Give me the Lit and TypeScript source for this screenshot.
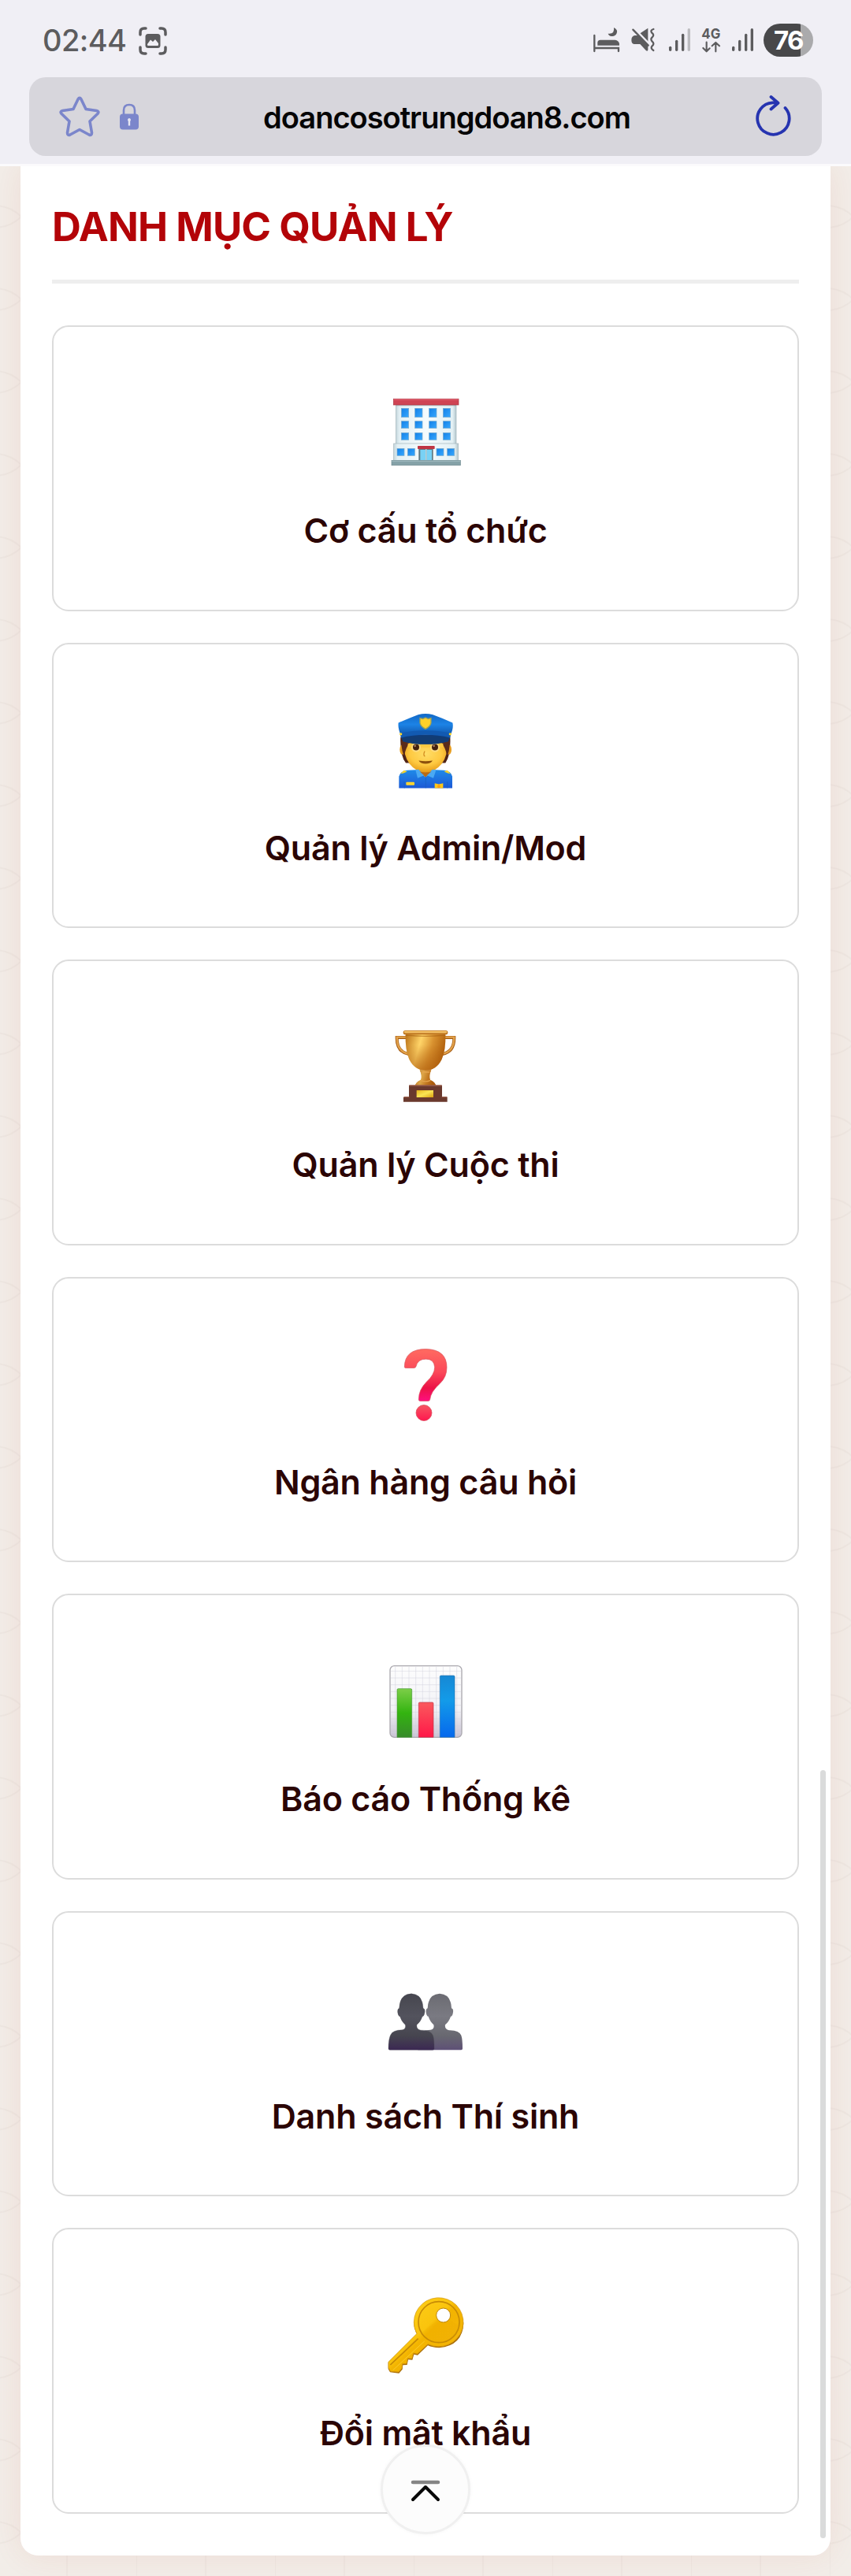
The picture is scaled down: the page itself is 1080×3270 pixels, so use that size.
import { LitElement, css, html, svg } from 'lit'
import { customElement } from 'lit/decorators.js'

const ICONS = {
  office: svg`
    <defs>
      <linearGradient id="wall" x1="0" x2="1" y1="0" y2="0">
        <stop offset="0" stop-color="#c3d5db" />
        <stop offset=".06" stop-color="#e3f0f4" />
        <stop offset=".5" stop-color="#f5fbfd" />
        <stop offset=".94" stop-color="#e3f0f4" />
        <stop offset="1" stop-color="#b3c6cc" />
      </linearGradient>
      <linearGradient id="pane" x1="0" x2="1" y1="0" y2="1">
        <stop offset="0" stop-color="#1480e6" />
        <stop offset="1" stop-color="#36a8ff" />
      </linearGradient>
    </defs>
    <rect x="187" y="128" width="230" height="155" fill="url(#wall)" stroke="#a3b4ba" stroke-width="2" />
    <rect x="179" y="279" width="246" height="66" fill="url(#wall)" stroke="#a3b4ba" stroke-width="2" />
    <rect x="188" y="130" width="228" height="6" fill="#9aabb0" opacity=".6" />
    <rect x="178" y="109" width="248" height="23" fill="#cf4454" stroke="#a93341" stroke-width="2" />
    <rect x="179" y="110" width="246" height="4" fill="#e05f6e" />
    ${[145, 194, 238].map((y, i) => [208, 260, 314, 367].map((x) => svg`
      <rect x=${x} y=${y} width="28" height=${i ? 27 : 34} fill="url(#pane)" stroke="#75a9cc" stroke-width="2" />
    `))}
    ${[192, 232, 342, 383].map((x) => svg`
      <rect x=${x} y="298" width="27" height="27" fill="url(#pane)" stroke="#75a9cc" stroke-width="2" />
    `)}
    <rect x="274" y="298" width="55" height="46" fill="#5e7881" />
    <rect x="280" y="303" width="20" height="40" fill="#79d2f5" />
    <rect x="304" y="303" width="20" height="40" fill="#79d2f5" />
    <rect x="301" y="300" width="3" height="44" fill="#e8f5f9" />
    <rect x="270" y="288" width="65" height="12" rx="2" fill="#bf3544" />
    <rect x="171" y="343" width="262" height="19" fill="#85a2a8" stroke="#6d898f" stroke-width="2" />
    <rect x="172" y="344" width="260" height="4" fill="#9db7bc" />
  `,
  officer: svg`
    <defs>
      <linearGradient id="cap" x1="0" x2="0" y1="0" y2="1">
        <stop offset="0" stop-color="#1268c5" />
        <stop offset=".5" stop-color="#1c83e6" />
        <stop offset="1" stop-color="#1157ac" />
      </linearGradient>
      <radialGradient id="skin" cx=".5" cy=".4" r=".6">
        <stop offset="0" stop-color="#ffdd67" />
        <stop offset=".6" stop-color="#fec941" />
        <stop offset="1" stop-color="#e59a17" />
      </radialGradient>
      <linearGradient id="shirt" x1="0" x2="0" y1="0" y2="1">
        <stop offset="0" stop-color="#1f8be9" />
        <stop offset="1" stop-color="#1c59d6" />
      </linearGradient>
    </defs>
    <path d="M205 165 Q202 235 225 264 H240 V165 Z M394 165 Q397 235 376 264 H360 V165 Z" fill="#4e2317" />
    <ellipse cx="212" cy="213" rx="10" ry="19" fill="#e69c1e" />
    <ellipse cx="389" cy="213" rx="10" ry="19" fill="#e69c1e" />
    <path d="M274 275 H326 V302 L300 318 L274 302 Z" fill="#c9781a" />
    <path d="M217 180 H384 Q386 235 362 267 Q335 300 300 300 Q265 300 239 267 Q215 235 217 180 Z" fill="url(#skin)" />
    <path d="M207 180 Q210 225 219 237 Q225 205 240 186 H360 Q376 205 382 237 Q391 225 393 180 Z" fill="#5b2b19" />
    <path d="M233 190 H367 V205 H233 Z" fill="#fdc942" />
    <circle cx="264" cy="205" r="18" fill="#ffdf8a" opacity=".8" />
    <circle cx="336" cy="205" r="18" fill="#ffdf8a" opacity=".8" />
    <circle cx="264" cy="204" r="12" fill="#43210f" />
    <circle cx="336" cy="204" r="12" fill="#43210f" />
    <circle cx="260" cy="199" r="4" fill="#a9805e" />
    <circle cx="332" cy="199" r="4" fill="#a9805e" />
    <path d="M297 219 Q290 235 298 239" fill="none" stroke="#d38d20" stroke-width="4" />
    <path d="M274 255 Q300 260 327 255 Q320 267 300 267 Q281 267 274 255 Z" fill="#8d500d" />
    <path d="M203 155 H397 L387 182 Q352 193 300 193 Q248 193 214 182 Z" fill="#103d7b" />
    <path d="M206 158 Q194 130 197 111 Q240 92 272 80 Q300 73 328 80 Q362 92 403 111 Q408 130 395 158 Q350 148 300 148 Q250 148 206 158 Z" fill="url(#cap)" />
    <path d="M206 150 Q250 140 300 140 Q350 140 395 150 L394 168 Q350 157 300 157 Q250 157 207 168 Z" fill="#125ab1" />
    <path d="M214 169 Q300 153 387 169 L382 181 Q350 192 300 192 Q245 192 220 181 Z" fill="#123c73" />
    <circle cx="206" cy="154" r="5" fill="#ffd82b" />
    <circle cx="394" cy="154" r="5" fill="#ffd82b" />
    <path d="M300 89 L310 94 L323 91 V112 Q320 128 300 137 Q280 128 277 112 V91 L290 94 Z" fill="#9ba05a" />
    <path d="M300 94 L310 98 L319 96 V112 Q316 124 300 132 Q284 124 281 112 V96 L290 98 Z" fill="#ffd129" />
    <path d="M199 360 V315 Q204 294 232 292 L264 290 L300 318 L336 290 L369 292 Q397 294 402 315 V360 Z" fill="url(#shirt)" />
    <path d="M262 290 L273 289 L300 312 L327 289 L340 292 L330 322 L300 309 L270 322 Z" fill="#4aa9f3" />
    <path d="M277 296 L300 316 L323 296 Q300 305 277 296 Z" fill="#b96b16" />
    <path d="M301 316 V360 M219 335 L220 360 M383 335 V360" stroke="#1a5fbb" stroke-width="2" />
    <path d="M205 305 L218 292 L230 297 L216 303 Z M396 305 L383 292 L371 297 L385 303 Z" fill="#f5d22c" />
    <rect x="226" y="337" width="32" height="12" rx="3" fill="#ffd531" />
    <path d="M335 341 L351 345 L367 341 V360 H335 Z" fill="#ffc818" />
    <circle cx="351" cy="353" r="6" fill="#f99d17" />
  `,
  trophy: svg`
    <defs>
      <linearGradient id="cup" x1="0" x2="1" y1="0" y2=".25">
        <stop offset="0" stop-color="#b96f15" />
        <stop offset=".4" stop-color="#ffd468" />
        <stop offset=".7" stop-color="#d8912f" />
        <stop offset="1" stop-color="#b4640f" />
      </linearGradient>
      <linearGradient id="shade" x1="0" x2="0" y1="0" y2="1">
        <stop offset=".3" stop-color="#b0600f" stop-opacity="0" />
        <stop offset="1" stop-color="#b0600f" stop-opacity=".65" />
      </linearGradient>
      <linearGradient id="plate" x1="0" x2="1" y1="0" y2="1">
        <stop offset="0" stop-color="#e7b31b" />
        <stop offset=".5" stop-color="#f9e554" />
        <stop offset="1" stop-color="#d9a010" />
      </linearGradient>
    </defs>
    <path d="M228 111 H191 Q190 166 236 174 M372 111 H409 Q410 166 364 174" fill="none" stroke="#a65c13" stroke-width="12" />
    <path d="M228 110 H191 Q191 165 236 173 M372 110 H409 Q409 165 364 173" fill="none" stroke="#e2a24b" stroke-width="7" />
    <path d="M278 235 H322 Q312 258 318 272 Q340 282 339 296 H261 Q260 282 282 272 Q288 258 278 235 Z" fill="url(#cup)" />
    <path d="M278 235 H322 Q312 258 318 272 Q340 282 339 296 H261 Q260 282 282 272 Q288 258 278 235 Z" fill="#954806" opacity=".32" />
    <path d="M284 243 H316 M281 274 Q300 283 319 274" fill="none" stroke="#e4a34c" stroke-width="4" />
    <path d="M224 97 H376 Q378 160 362 194 Q341 236 300 236 Q259 236 238 194 Q222 160 224 97 Z" fill="url(#cup)" />
    <path d="M224 97 H376 Q378 160 362 194 Q341 236 300 236 Q259 236 238 194 Q222 160 224 97 Z" fill="url(#shade)" />
    <path d="M224 102 Q300 110 376 102" stroke="#a86112" stroke-width="4" fill="none" opacity=".6" />
    <rect x="215" y="84" width="170" height="16" rx="8" fill="#c07924" />
    <path d="M222 90 H378" stroke="#f4c268" stroke-width="7" stroke-linecap="round" />
    <path d="M237 293 H363 V338 H383 V356 H216 V338 H237 Z" fill="#6a392d" />
    <path d="M238 294 H362 M218 338 H238 M362 338 H382" stroke="#9a5f4c" stroke-width="4" />
    <rect x="266" y="312" width="64" height="27" fill="url(#plate)" />
  `,
  question: svg`
    <defs>
      <linearGradient id="mark" x1="0" x2="0" y1="0" y2="1">
        <stop offset="0" stop-color="#ff6b61" />
        <stop offset=".45" stop-color="#fb4759" />
        <stop offset=".75" stop-color="#ec1247" />
        <stop offset="1" stop-color="#ff0f80" />
      </linearGradient>
      <linearGradient id="dot" x1="0" x2="0" y1="0" y2="1">
        <stop offset="0" stop-color="#f65661" />
        <stop offset="1" stop-color="#ff174f" />
      </linearGradient>
    </defs>
    <path d="M220 165 Q220 96 302 96 Q381 98 381 166 Q381 203 355 227 Q320 258 317 288 Q316 294 310 294 H280 Q274 294 274 288 Q274 251 303 222 Q335 193 335 165 Q333 134 302 134 Q270 134 264 162 Q262 168 256 168 H226 Q220 168 220 165 Z" fill="url(#mark)" stroke="#d64f58" stroke-width="2" />
    <circle cx="294" cy="339" r="30" fill="url(#dot)" stroke="#d44453" stroke-width="2" />
  `,
  chart: svg`
    <defs>
      <linearGradient id="sheet" x1="0" x2="0" y1="0" y2="1">
        <stop offset="0" stop-color="#fdfdfd" />
        <stop offset=".6" stop-color="#f3f3f7" />
        <stop offset="1" stop-color="#c9c3d4" />
      </linearGradient>
      <linearGradient id="green" x1="0" x2="0" y1="0" y2="1">
        <stop offset="0" stop-color="#7cce48" />
        <stop offset=".5" stop-color="#33b410" />
        <stop offset="1" stop-color="#388b2b" />
      </linearGradient>
      <linearGradient id="red" x1="0" x2="0" y1="0" y2="1">
        <stop offset="0" stop-color="#fa5a5d" />
        <stop offset="1" stop-color="#ff1748" />
      </linearGradient>
      <linearGradient id="blue" x1="0" x2="0" y1="0" y2="1">
        <stop offset="0" stop-color="#1688d4" />
        <stop offset=".4" stop-color="#139be9" />
        <stop offset="1" stop-color="#0668ed" />
      </linearGradient>
    </defs>
    <rect x="165" y="104" width="273" height="272" rx="16" fill="url(#sheet)" stroke="#aaa8ae" stroke-width="4" />
    ${[185, 211, 237, 263, 289, 315, 341, 367, 393, 419].map((x) => svg`
      <path d="M${x} 107 V373" stroke="#d2d3df" stroke-width="1.5" />
    `)}
    ${[124, 150, 176, 202, 228, 254, 280, 306, 332, 358].map((y) => svg`
      <path d="M168 ${y} H436" stroke="#d2d3df" stroke-width="1.5" />
    `)}
    <path d="M192 376 V195 Q192 191 196 191 H244 Q248 191 248 195 V376 Z" fill="url(#green)" stroke="#459934" stroke-width="2" />
    <path d="M274 376 V247 Q274 243 278 243 H326 Q330 243 330 247 V376 Z" fill="url(#red)" stroke="#bd3347" stroke-width="2" />
    <path d="M355 376 V145 Q355 141 359 141 H407 Q411 141 411 145 V376 Z" fill="url(#blue)" stroke="#2472b0" stroke-width="2" />
  `,
  people: svg`
    <defs>
      <linearGradient id="front" x1="0" x2="0" y1="0" y2="1">
        <stop offset="0" stop-color="#46464f" />
        <stop offset=".4" stop-color="#53535d" />
        <stop offset=".75" stop-color="#46454f" />
        <stop offset="1" stop-color="#3b2853" />
      </linearGradient>
      <linearGradient id="back" x1="0" x2="0" y1="0" y2="1">
        <stop offset="0" stop-color="#6b6b72" />
        <stop offset=".4" stop-color="#7a7a82" />
        <stop offset=".75" stop-color="#686870" />
        <stop offset="1" stop-color="#5e5076" />
      </linearGradient>
    </defs>
    <path transform="translate(108 0)" d="M246 121 Q289 123 291 176 Q299 178 297 191 Q295 207 288 208 Q281 229 267 239 Q264 256 282 260 Q320 259 328 280 Q333 294 333 330 Q333 335 328 335 H164 Q159 335 159 330 Q159 294 167 278 Q176 259 211 259 Q227 256 223 239 Q210 229 203 208 Q196 207 194 191 Q193 178 200 176 Q202 123 246 121 Z" fill="url(#back)" />
    <path d="M246 121 Q289 123 291 176 Q299 178 297 191 Q295 207 288 208 Q281 229 267 239 Q264 256 282 260 Q320 259 328 280 Q333 294 333 330 Q333 335 328 335 H164 Q159 335 159 330 Q159 294 167 278 Q176 259 211 259 Q227 256 223 239 Q210 229 203 208 Q196 207 194 191 Q193 178 200 176 Q202 123 246 121 Z" fill="url(#front)" stroke="#3f3f48" stroke-width="1" />
  `,
  key: svg`
    <defs>
      <linearGradient id="gold" x1="0" x2="1" y1="0" y2="1">
        <stop offset="0" stop-color="#ffd21f" />
        <stop offset=".45" stop-color="#fac40d" />
        <stop offset=".5" stop-color="#f3b400" />
        <stop offset="1" stop-color="#f4b50e" />
      </linearGradient>
    </defs>
    <path d="M256 176 Q260 98 350 82 Q430 86 445 176 Q442 262 352 271 Q326 270 309 262 L270 299 L256 296 L250 317 L234 316 L230 336 L214 337 L212 353 L199 368 L165 364 L158 352 V326 L267 218 Q256 199 256 176 Z" fill="#a96d08" />
    <path d="M256 174 A94 93 0 1 1 309 257 L269 294 L254 291 L248 312 L232 311 L228 331 L212 332 L210 349 L198 363 L167 361 L159 348 V325 L267 217 Q256 197 256 174 Z" fill="url(#gold)" stroke="#d19713" stroke-width="2" />
    <circle cx="351" cy="173" r="78" fill="none" stroke="#c68a06" stroke-width="5" />
    <path d="M285 214 L368 147 L430 190 Q412 250 351 250 Q310 248 285 214 Z" fill="#e9a800" opacity=".18" />
    <path d="M166 336 L272 236" stroke="#c48706" stroke-width="5" />
    <path d="M176 356 L296 246" stroke="#ffdd4b" stroke-width="3" opacity=".6" />
    <circle cx="368" cy="147" r="27" fill="#fff" stroke="#bd850c" stroke-width="3" />
  `
}

// top is where the artwork starts on its 600x450 drawing board
const MENU = [
  { label: 'Cơ cấu tổ chức', icon: ICONS.office, top: 69 },
  { label: 'Quản lý Admin/Mod', icon: ICONS.officer, top: 46.5 },
  { label: 'Quản lý Cuộc thi', icon: ICONS.trophy, top: 54 },
  { label: 'Ngân hàng câu hỏi', icon: ICONS.question, top: 61.5 },
  { label: 'Báo cáo Thống kê', icon: ICONS.chart, top: 69 },
  { label: 'Danh sách Thí sinh', icon: ICONS.people, top: 46.5 },
  { label: 'Đổi mật khẩu', icon: ICONS.key, top: 54 }
]

@customElement('status-bar')
export class StatusBar extends LitElement {
  static styles = css`
    :host {
      display: flex;
      align-items: center;
      height: 98px;
      padding: 0 48px 0 54px;
      box-sizing: border-box;
      color: #5c5c5e;
      font-family: Inter, 'Liberation Sans', sans-serif;
    }
    .time {
      font-size: 38px;
      font-weight: 500;
      letter-spacing: -0.6px;
      line-height: 60px;
      margin-top: 4px;
    }
    .capture {
      width: 36px;
      height: 36px;
      margin: 5px auto 0 16px;
    }
    .cluster {
      display: flex;
      margin-top: 2px;
    }
    .cluster svg {
      height: 60px;
    }
    .battery {
      width: 63px;
      height: 42px;
      margin: 10px 0 0 3px;
      border-radius: 21px;
      background: linear-gradient(90deg, #48484a 75%, #aaaaac 75%);
      color: #fff;
      font-size: 33px;
      font-weight: 700;
      letter-spacing: -1.5px;
      line-height: 43px;
      text-align: center;
    }
  `

  _signal (left, width, faded) {
    return html`
      <svg width=${width / 3} viewBox="${left} 0 ${width} 180">
        <g stroke="#5c5c5e" stroke-width="10" stroke-linecap="round">
          <path d="M${left + 17} 121 V130" />
          <path d="M${left + 41} 97 V130" />
          <path d="M${left + 65} 73 V130" />
          <path d="M${left + 88} 53 V130" opacity=${faded ? 0.35 : 1} />
        </g>
      </svg>
    `
  }

  render () {
    return html`
      <span class="time">02:44</span>
      <svg class="capture" viewBox="0 0 36 36">
        <path d="M2 10 V7 Q2 2 7 2 H9 M27 2 H29 Q34 2 34 7 V10 M34 26 V29 Q34 34 29 34 H27 M9 34 H7 Q2 34 2 29 V26" fill="none" stroke="#5c5c5e" stroke-width="3.5" stroke-linecap="round" />
        <rect x="8.500" y="9" width="19" height="18" rx="3.500" fill="#5c5c5e" />
        <path d="M11 22 L15 16.500 L18 19 L21 16 L25 21 V23 Q25 24 24 24 H12 Q11 24 11 23 Z" fill="#f0eff5" />
      </svg>
      <div class="cluster">
        <svg width="48.300" viewBox="60 0 145 180">
          <path d="M73 75 V135 M73 123 H165 V135" fill="none" stroke="#5c5c5e" stroke-width="7" stroke-linecap="round" />
          <path d="M85 113 V103 Q85 92 96 92 H152 Q165 94 168 106 V113 Z" fill="#5c5c5e" />
          <path d="M147 45 Q164 53 158 67 Q152 80 138 78 Q128 77 125 68 Q151 71 147 45 Z" fill="#5c5c5e" />
        </svg>
        <svg width="46.700" viewBox="205 0 140 180">
          <path d="M246 68 L278 47 V130 Q277 137 271 133 L248 108 H225 Q215 106 215 92 Q215 78 227 75 H243 Z" fill="#5c5c5e" />
          <path d="M223 47 L293 119" stroke="#f0eff5" stroke-width="9" />
          <path d="M221 53 L279 113" stroke="#5c5c5e" stroke-width="7" stroke-linecap="round" />
          <path d="M299 51 Q286 55 292 64 Q304 73 294 82 Q286 89 294 98 Q304 106 294 115 Q286 124 299 132" fill="none" stroke="#5c5c5e" stroke-width="7" stroke-linecap="round" />
        </svg>
        ${this._signal(345, 125, true)}
        <svg width="38.300" viewBox="470 0 115 180">
          <text x="480" y="87" textLength="72" lengthAdjust="spacingAndGlyphs" font-size="54" font-weight="700" fill="#5c5c5e">4G</text>
          <path d="M499 101 V135 M486 123 L499 136 L511 124 M534 136 V103 M520 115 L534 102 L548 115" fill="none" stroke="#5c5c5e" stroke-width="6.500" stroke-linecap="round" stroke-linejoin="round" />
        </svg>
        ${this._signal(582, 123, false)}
        <div class="battery">76</div>
      </div>
    `
  }
}

@customElement('address-bar')
export class AddressBar extends LitElement {
  static styles = css`
    :host {
      display: flex;
      align-items: center;
      height: 100px;
      margin: 0 37px;
      padding: 0 38px;
      box-sizing: border-box;
      border-radius: 21px;
      background: #d7d6dc;
      color: #050506;
      font-family: Inter, 'Liberation Sans', sans-serif;
    }
    .side {
      display: flex;
      align-items: center;
      width: 160px;
      gap: 24px;
    }
    .end {
      width: 106px;
      justify-content: flex-end;
    }
    .url {
      flex: 1;
      margin-top: 2px;
      font-size: 38px;
      font-weight: 600;
      letter-spacing: -1px;
      text-align: center;
      white-space: nowrap;
    }
  `

  render () {
    return html`
      <div class="side">
        <svg width="52" height="52" viewBox="0 0 52 52">
          <path d="M24 4 Q26 0.800 28 4 L34 16.500 L47.500 18.500 Q51.500 19.500 48.800 22.500 L39 32 L41.500 46.500 Q41.500 50.500 38 49 L26 42.500 L14 49 Q10.500 50.500 10.500 46.500 L13 32 L3.200 22.500 Q0.500 19.500 4.500 18.500 L18 16.500 Z" fill="none" stroke="#7b86cb" stroke-width="3.600" stroke-linejoin="round" />
        </svg>
        <svg width="26" height="34" viewBox="0 0 26 34">
          <path d="M6 15 V9 Q6 2 13 2 Q20 2 20 9 V15" fill="none" stroke="#7b86cb" stroke-width="2.600" />
          <rect x="1" y="13.500" width="24" height="20" rx="4" fill="#7b86cb" />
          <path d="M13 19 A2.300 2.300 0 0 1 14.200 23 V28.500 H11.800 V23 A2.300 2.300 0 0 1 13 19 Z" fill="#e6e6f2" />
        </svg>
      </div>
      <span class="url">doancosotrungdoan8.com</span>
      <div class="side end">
        <svg width="50" height="56" viewBox="0 0 50 56">
          <path d="M41.500 17 A20.200 20.200 0 1 1 25.500 10.300 H32 M23.500 3 L32.500 10.700 L23.500 18.500" fill="none" stroke="#2634b0" stroke-width="3.800" stroke-linecap="round" stroke-linejoin="round" />
        </svg>
      </div>
    `
  }
}

@customElement('menu-card')
export class MenuCard extends LitElement {
  static properties = {
    item: { attribute: false }
  }

  static styles = css`
    :host {
      display: flex;
      flex-direction: column;
      align-items: center;
      height: 362.5px;
      padding-top: 78px;
      box-sizing: border-box;
      border: 2px solid #dcdcdc;
      border-radius: 21px;
      background: #fff;
    }
    .icon {
      width: 100px;
      height: 100px;
      overflow: visible;
    }
    .label {
      margin-top: 50px;
      color: #2b0505;
      font-family: Inter, 'Noto Sans', sans-serif;
      font-size: 43px;
      font-weight: 600;
      letter-spacing: -0.2px;
      line-height: 60px;
      white-space: nowrap;
    }
  `

  declare item

  render () {
    return html`
      <svg class="icon" viewBox="150 ${this.item.top} 300 300">${this.item.icon}</svg>
      <span class="label">${this.item.label}</span>
    `
  }
}

@customElement('app-root')
export class AppRoot extends LitElement {
  static styles = css`
    :host {
      display: block;
      position: relative;
      width: 1080px;
      height: 3270px;
      overflow: hidden;
      background: #f2ede8;
    }
    .pattern {
      position: absolute;
      inset: 0;
    }
    .chrome {
      position: relative;
      height: 208px;
      border-bottom: 3px solid #fbfafc;
      background: #f0eff5;
      z-index: 1;
    }
    .panel {
      position: relative;
      height: 3033px;
      margin: 0 26px;
      padding: 0 40px;
      box-sizing: border-box;
      border-radius: 0 0 22px 22px;
      background: #fff;
      box-shadow: 0 0 40px rgba(200, 60, 30, 0.09);
    }
    .title {
      height: 149px;
      margin: 0 0 53px;
      padding-top: 42px;
      box-sizing: border-box;
      border-bottom: 5px solid #eee;
      color: #b30408;
      font-family: Inter, 'Noto Sans', sans-serif;
      font-size: 51px;
      font-weight: 700;
      letter-spacing: -0.9px;
      line-height: 70px;
      white-space: nowrap;
    }
    .list {
      display: flex;
      flex-direction: column;
      gap: 40px;
    }
    .scrollbar {
      position: absolute;
      top: 2247px;
      left: 1041px;
      width: 7px;
      height: 975px;
      border-radius: 4px;
      background: #dadbdb;
    }
    .to-top {
      position: absolute;
      top: 3103px;
      left: 483px;
      width: 114px;
      height: 114px;
      box-sizing: border-box;
      border: 3px solid #f0f0f0;
      border-radius: 50%;
      background: #fcfcfc;
      box-shadow: 0 0 5px rgba(0, 0, 0, 0.04);
    }
  `

  render () {
    return html`
      <svg class="pattern" width="1080" height="3270">
        <defs>
          <pattern id="lattice" x="-3" y="275" width="176" height="105" patternUnits="userSpaceOnUse">
            <g fill="none" stroke="#8d8378" stroke-width="2" opacity=".06">
              <path d="M0 0 V105 M88 0 V105" />
              <path d="M0 14 Q18 12 30 0 M0 91 Q18 93 30 105 M176 14 Q158 12 146 0 M176 91 Q158 93 146 105" />
            </g>
          </pattern>
        </defs>
        <rect width="1080" height="3270" fill="url(#lattice)" />
      </svg>
      <header class="chrome">
        <status-bar></status-bar>
        <address-bar></address-bar>
      </header>
      <main class="panel">
        <h1 class="title">DANH MỤC QUẢN LÝ</h1>
        <div class="list">
          ${MENU.map((item) => html`<menu-card .item=${item}></menu-card>`)}
        </div>
      </main>
      <div class="scrollbar"></div>
      <div class="to-top">
        <svg width="108" height="108" viewBox="486 3106 108 108">
          <path d="M524 3151 H556" stroke="#858585" stroke-width="4.500" stroke-linecap="round" />
          <path d="M524 3173 L540 3157 L556 3173" fill="none" stroke="#080808" stroke-width="4" stroke-linecap="round" stroke-linejoin="round" />
        </svg>
      </div>
    `
  }
}
